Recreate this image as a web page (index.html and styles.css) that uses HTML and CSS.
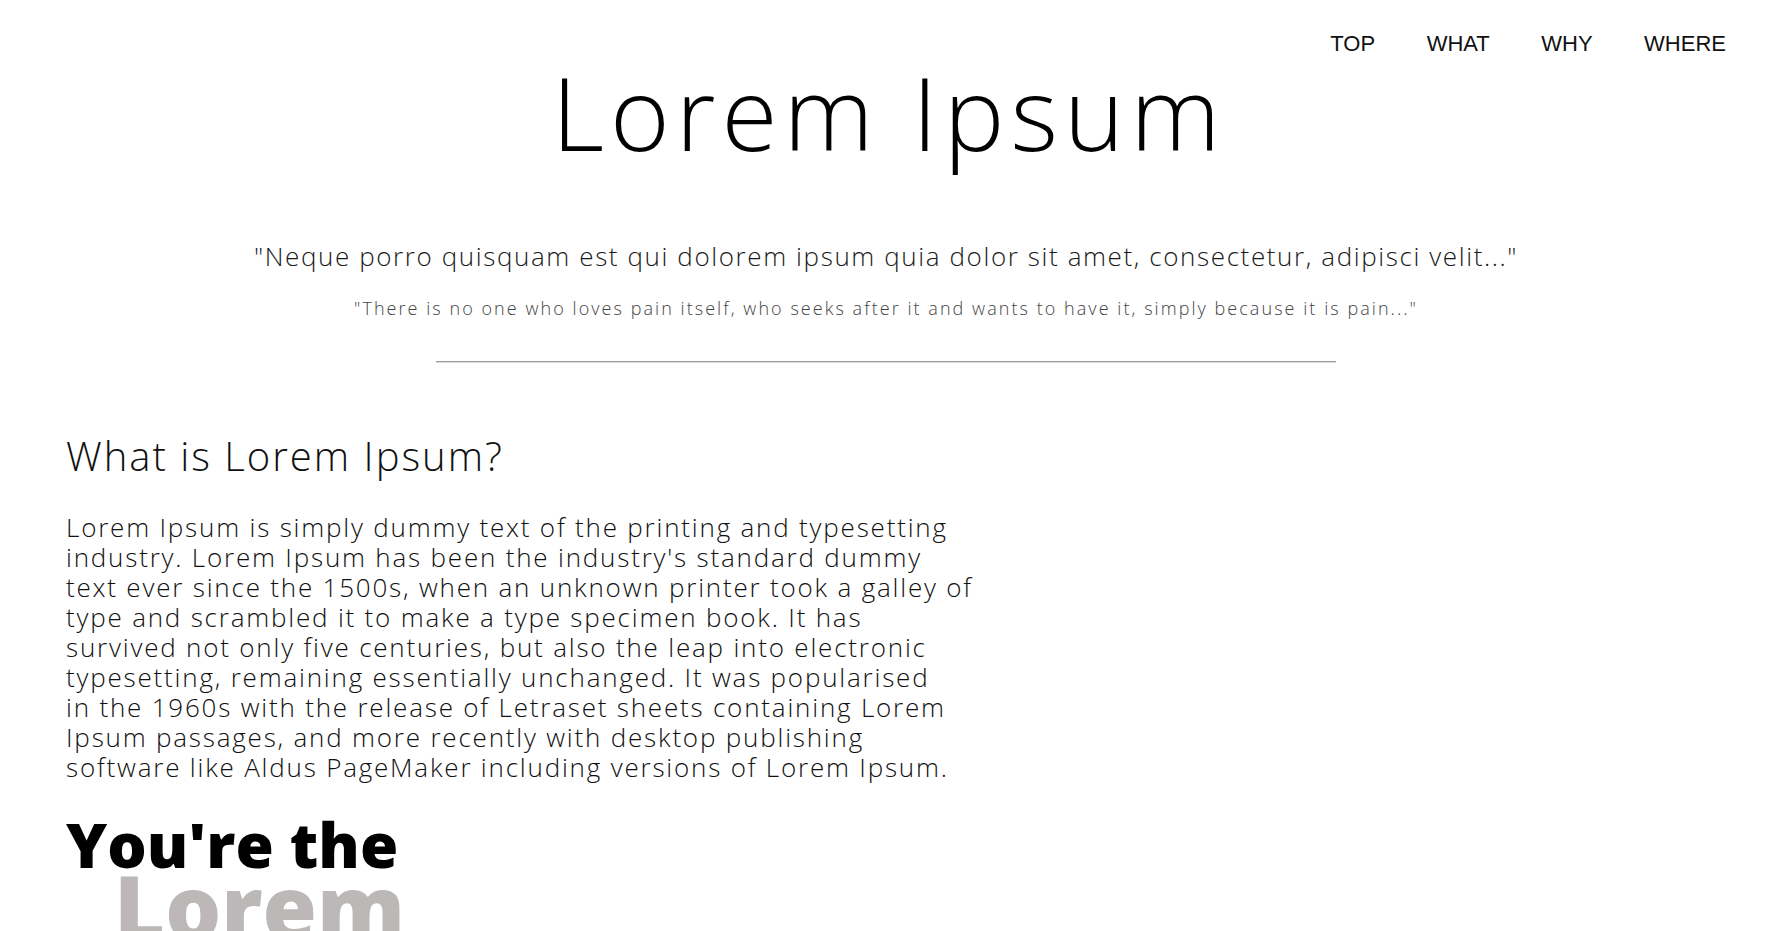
FILE: index.html
```html
<!DOCTYPE html>
<html lang="en">
<head>
<meta charset="utf-8">
<title>Lorem Ipsum</title>
<link rel="stylesheet" href="styles.css">
</head>
<body>
<header class="top">
  <nav class="nav">
    <a class="nav-link" href="#top">TOP</a>
    <a class="nav-link" href="#what">WHAT</a>
    <a class="nav-link" href="#why">WHY</a>
    <a class="nav-link" href="#where">WHERE</a>
  </nav>
  <h1 class="title" id="top">Lorem Ipsum</h1>
  <p class="quote">"Neque porro quisquam est qui dolorem ipsum quia dolor sit amet, consectetur, adipisci velit..."</p>
  <p class="quote-sub">"There is no one who loves pain itself, who seeks after it and wants to have it, simply because it is pain..."</p>
  <hr class="rule">
</header>
<main class="content">
  <section class="what" id="what">
    <h2 class="section-title">What is Lorem Ipsum?</h2>
    <p class="body-text">Lorem Ipsum is simply dummy text of the printing and typesetting<br>industry. Lorem Ipsum has been the industry's standard dummy<br>text ever since the 1500s, when an unknown printer took a galley of<br>type and scrambled it to make a type specimen book. It has<br>survived not only five centuries, but also the leap into electronic<br>typesetting, remaining essentially unchanged. It was popularised<br>in the 1960s with the release of Letraset sheets containing Lorem<br>Ipsum passages, and more recently with desktop publishing<br>software like Aldus PageMaker including versions of Lorem Ipsum.</p>
  </section>
  <div class="promo">
    <div class="promo-line1">You're the</div>
    <div class="promo-line2">Lorem</div>
  </div>
</main>
</body>
</html>
```
FILE: styles.css
```css
html, body {
  margin: 0;
  padding: 0;
  background: #fff;
}
body {
  font-family: "Open Sans", "Noto Sans", sans-serif;
  font-weight: 300;
  color: #111;
  overflow: hidden;
}
.top {
  display: flex;
  flex-direction: column;
  align-items: center;
}
.nav {
  align-self: stretch;
  display: flex;
  justify-content: flex-end;
  gap: 51.5px;
  padding: 31px 46px 0 0;
  margin-bottom: 1px;
}
.nav-link {
  font-family: "Liberation Sans", Arial, sans-serif;
  font-weight: 400;
  font-size: 22px;
  color: #111;
  text-decoration: none;
}
.title {
  margin: 3px 0 0;
  font-size: 102px;
  font-weight: 300;
  line-height: 1;
  color: #000;
  letter-spacing: 6px;
  text-indent: 6px;
}
.quote {
  margin: 80px 0 0;
  font-size: 26px;
  line-height: 1;
  color: #1a1a1a;
  letter-spacing: 1.6px;
}
.quote-sub {
  margin: 30px 0 0;
  font-size: 18px;
  line-height: 1;
  color: #444;
  letter-spacing: 2.05px;
}
.rule {
  width: 900px;
  margin: 44px 0 0;
  border: 0;
  border-top: 1px solid #9a9a9a;
  border-bottom: 1px solid #dcdcdc;
  height: 0;
}
.content {
  padding: 0 66px;
}
.section-title {
  margin: 73px 0 0;
  font-size: 40px;
  font-weight: 300;
  line-height: 1;
  color: #111;
  letter-spacing: 2px;
}
.body-text {
  margin: 36px 0 0;
  font-size: 26px;
  line-height: 30px;
  color: #111;
  letter-spacing: 1.8px;
}
.promo {
  margin-top: 31px;
  display: flex;
  flex-direction: column;
  align-items: flex-start;
}
.promo-line1 {
  font-size: 62px;
  font-weight: 800;
  line-height: 1;
  color: #000;
}
.promo-line2 {
  margin: -13px 0 0 48px;
  font-size: 88px;
  font-weight: 800;
  line-height: 1;
  color: #bcb8b8;
}
```
